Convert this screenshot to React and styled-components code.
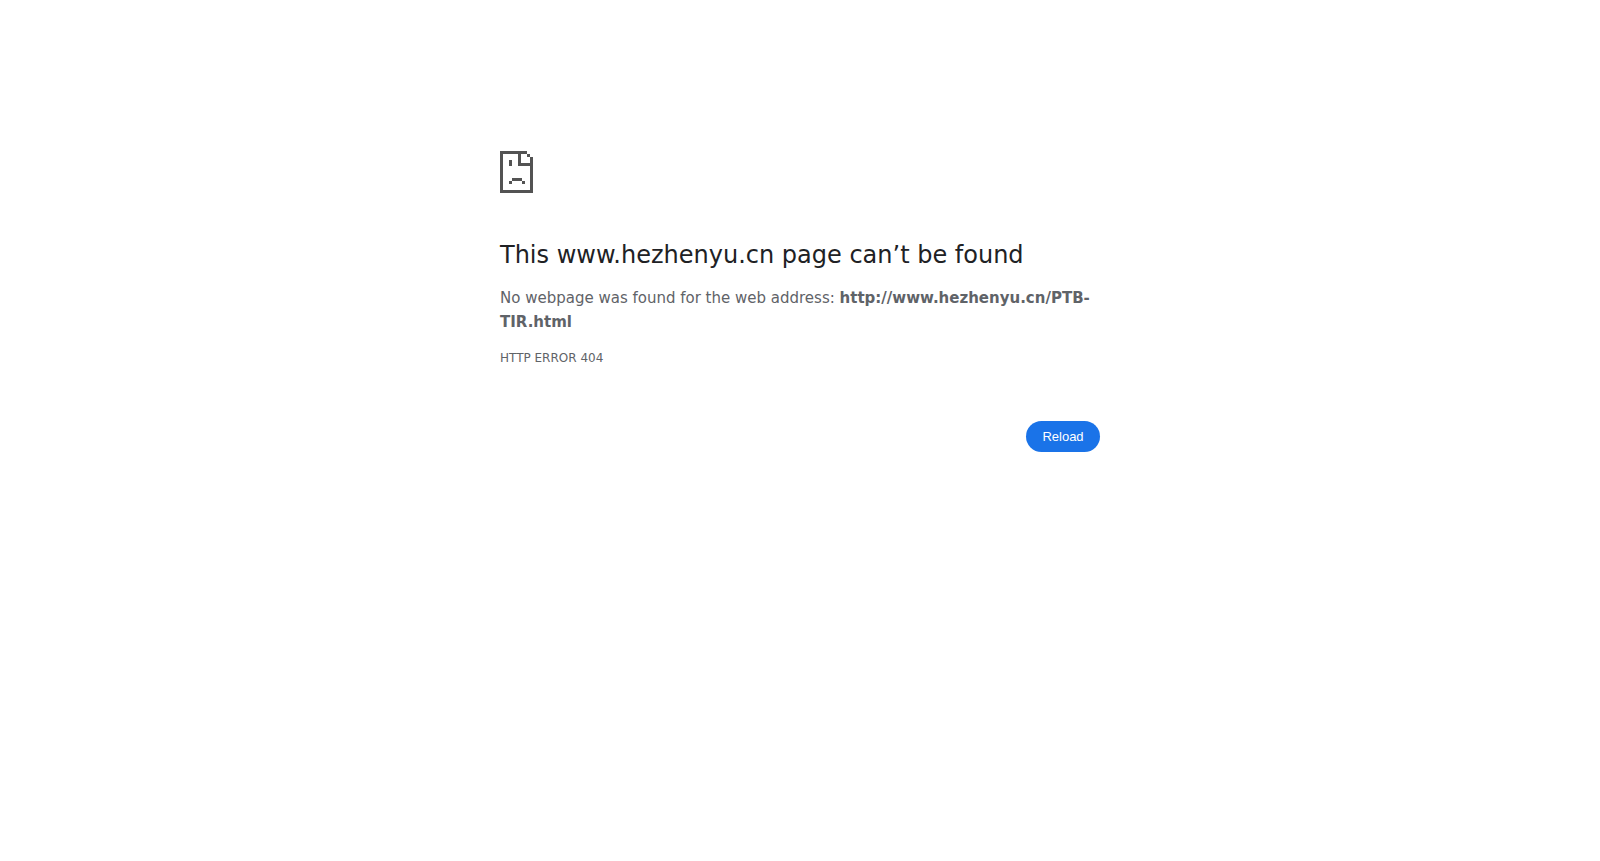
import React from "react";
import styled, { createGlobalStyle } from "styled-components";

const GlobalStyle = createGlobalStyle`
  body {
    margin: 0;
    background: #ffffff;
    color: #5f6368;
    font-family: "DejaVu Sans", sans-serif;
    font-size: 15px;
    line-height: 24px;
  }
`;

const SadPageIcon = () => (
  <Icon viewBox='0 0 33 42' shapeRendering='crispEdges' aria-hidden='true'>
    <path
      d='M0 0h27v3H21v9h9V6h3v36H0zM3 3v36h27V15H18V3z'
      fillRule='evenodd'
    />
    <path d='M27 3h3v3h-3zM9 9h3v6H9z' />
    <path d='M12 27h10v3H12zM9 30h3v3H9zM22 30h3v3h-3z' />
  </Icon>
);

const App = () => {
  return (
    <>
      <GlobalStyle />
      <ErrorPage>
        <SadPageIcon />
        <Title>This www.hezhenyu.cn page can’t be found</Title>
        <Summary>
          No webpage was found for the web address:{" "}
          <strong>http://www.hezhenyu.cn/PTB-TIR.html</strong>
        </Summary>
        <ErrorCode>HTTP ERROR 404</ErrorCode>
        <Actions>
          <ReloadButton type='button' onClick={() => window.location.reload()}>
            Reload
          </ReloadButton>
        </Actions>
      </ErrorPage>
    </>
  );
};

const ErrorPage = styled.main`
  box-sizing: border-box;
  max-width: 600px;
  margin: 0 auto;
  padding-top: 151px;
`;

const Icon = styled.svg`
  display: block;
  width: 33px;
  height: 42px;
  fill: #535353;
`;

const Title = styled.h1`
  margin: 47px 0 16px;
  color: #202124;
  font-size: 24px;
  font-weight: 500;
  line-height: 30px;
`;

const Summary = styled.p`
  margin: 0;
`;

const ErrorCode = styled.div`
  margin-top: 12px;
  font-size: 12px;
`;

const Actions = styled.div`
  display: flex;
  justify-content: flex-end;
  margin-top: 51px;
`;

const ReloadButton = styled.button`
  min-width: 74px;
  padding: 8px 16px;
  border: 0;
  border-radius: 20px;
  background: #1a73e8;
  color: #ffffff;
  cursor: pointer;
  font-family: "Liberation Sans", Arial, sans-serif;
  font-size: 13px;
  line-height: 15px;
`;

export default App;
